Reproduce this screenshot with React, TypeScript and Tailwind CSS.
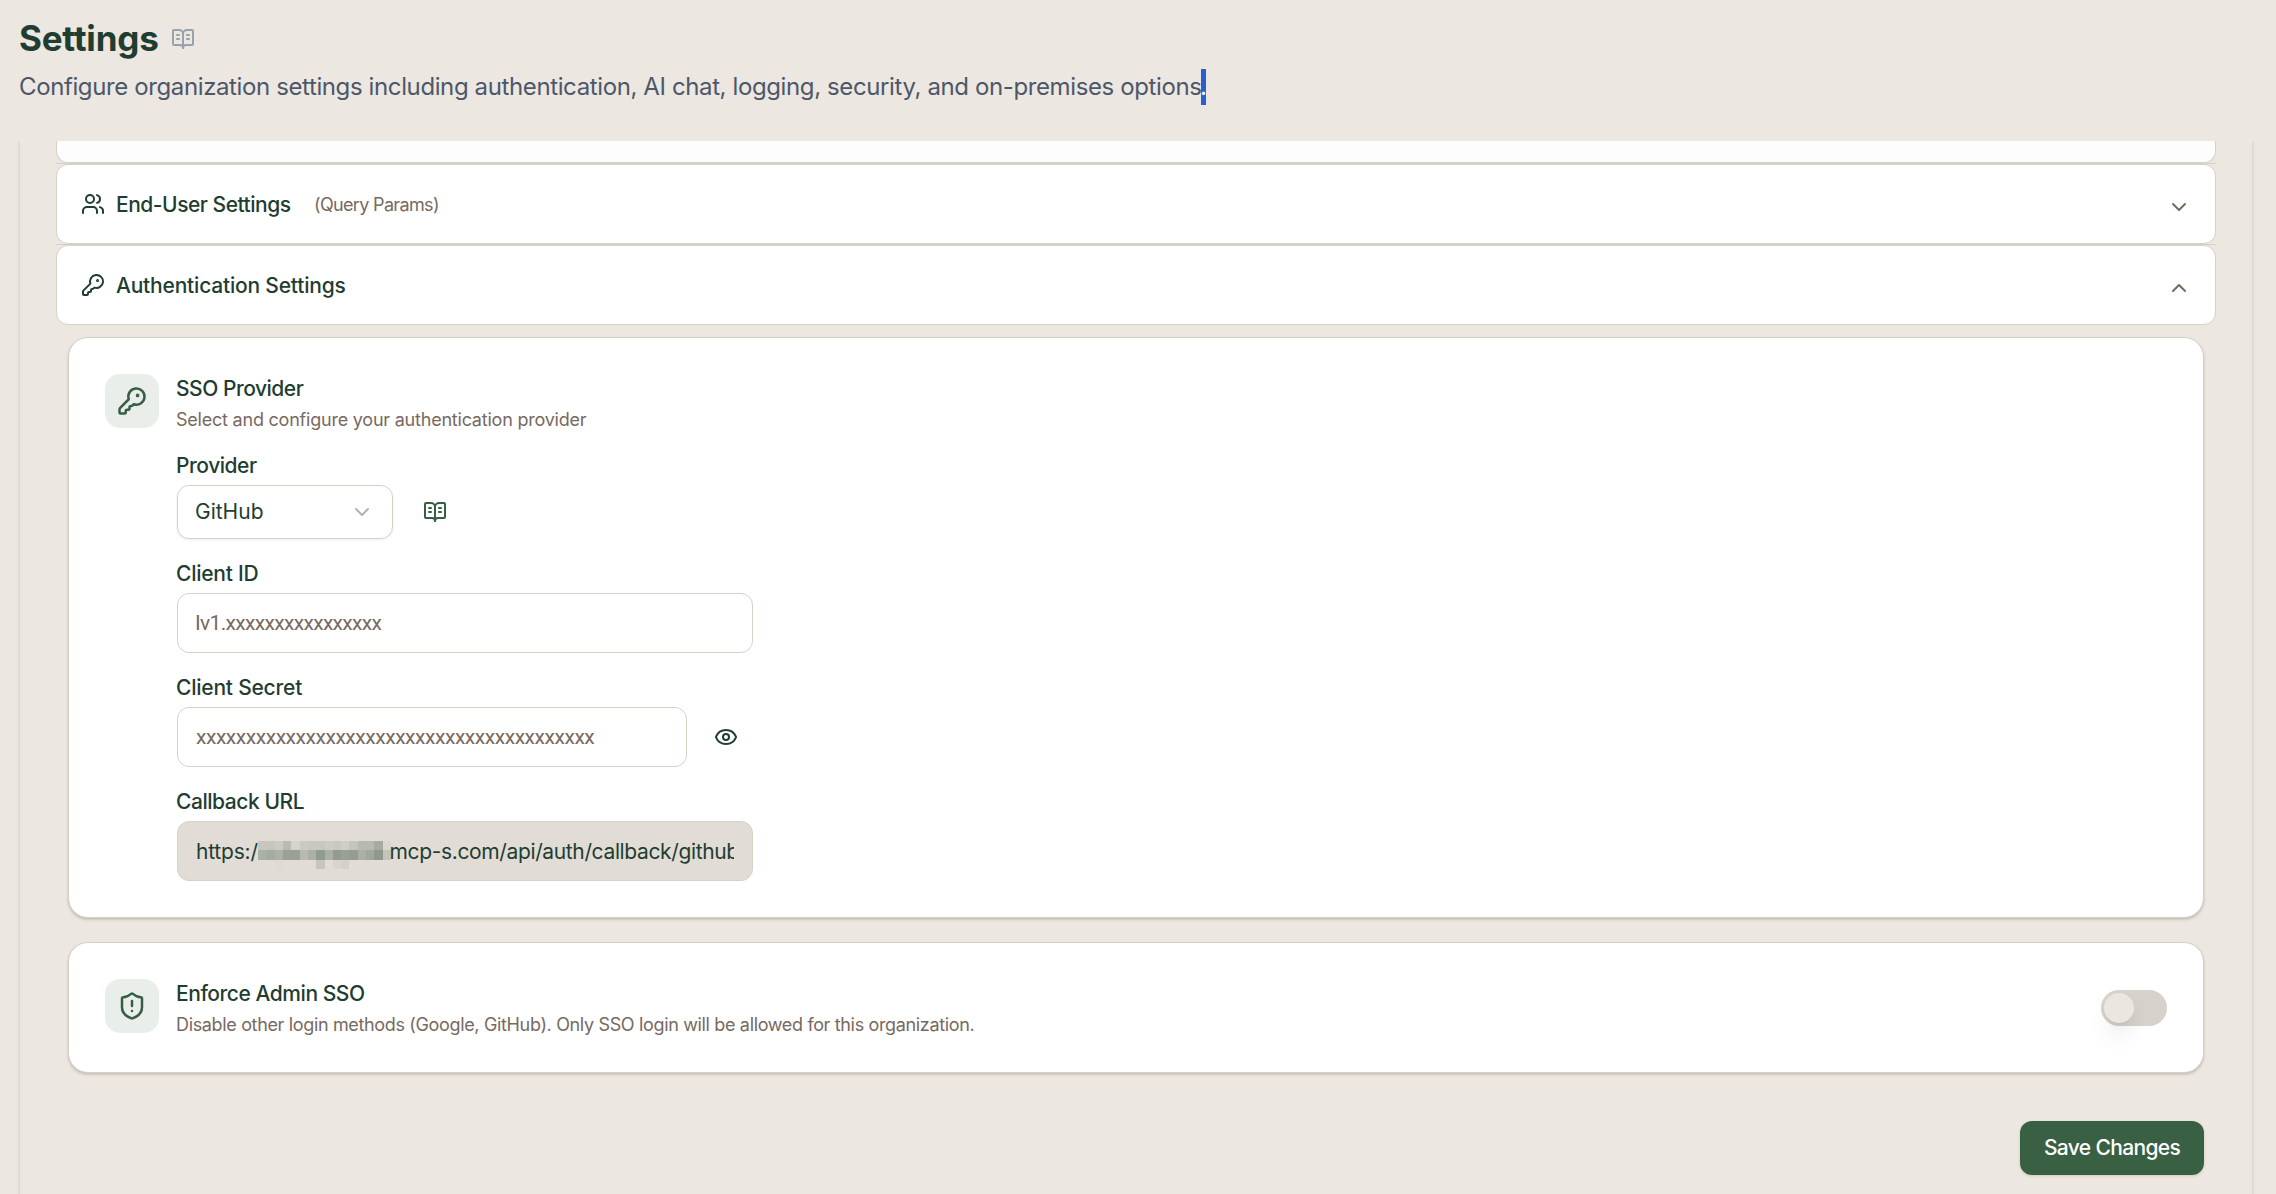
import type { ReactNode } from "react";
import { BookOpenText, ChevronDown, ChevronUp, Eye, KeyRound, ShieldAlert, Users } from "lucide-react";

const MOSAIC: string[][] = [
  ["#c7c7bf", "#c6c6be", "#cccac3", "#b9bcb4", "#d6d3cb", "#cbcac2", "#c8c8c0", "#c8c8c0", "#cecbc4", "#cac9c1", "#d0cec6", "#c5c5bd", "#b8bab1", "#b8bab1", "#a6aaa1", "#dbd6cf"],
  ["#acb1a7", "#a4aba0", "#acb1a7", "#9ba19a", "#9aa098", "#b8bab1", "#abafa5", "#929b92", "#abafa5", "#929b92", "#99a096", "#949c93", "#abafa5", "#a1a79d", "#8f988f", "#c4c4bc"],
  ["#e1dcd5", "#e1dcd5", "#dfdad2", "#e1dcd5", "#e1dcd5", "#e1dcd5", "#e1dcd5", "#c6c6be", "#e1dcd5", "#d9d4cc", "#d5d1c9", "#e1dcd5", "#e1dcd5", "#e1dcd5", "#e1dcd5", "#e1dcd5"],
];

function Redacted() {
  return (
    <div className="grid h-7 w-[133px] shrink-0 grid-cols-16 grid-rows-[9px_10px_9px]">
      {MOSAIC.flat().map((color, i) => (
        <span key={i} style={{ backgroundColor: color }} />
      ))}
    </div>
  );
}

function AccordionRow({ icon, chevron, children }: { icon: ReactNode; chevron: ReactNode; children: ReactNode }) {
  return (
    <div className="flex h-20 items-center rounded-xl border border-[#d6d1c7] bg-white pr-6 pl-6">
      {icon}
      <div className="mt-px ml-[11px] flex items-center text-[21px] font-medium">{children}</div>
      <div className="mt-1.5 ml-auto text-[#78695f]">{chevron}</div>
    </div>
  );
}

function Card({ children }: { children: ReactNode }) {
  return (
    <div className="rounded-[20px] border border-[#d6d1c7] bg-white p-9 shadow-[0_2px_3px_rgba(60,50,30,0.13),0_1px_2px_rgba(60,50,30,0.12)]">
      {children}
    </div>
  );
}

function Tile({ children }: { children: ReactNode }) {
  return (
    <div className="flex size-[54px] shrink-0 items-center justify-center rounded-[15px] bg-[#e9eeea] text-[#365e42]">
      {children}
    </div>
  );
}

function Label({ className, children }: { className: string; children: ReactNode }) {
  return <div className={`-ml-px h-[35px] text-[21px] leading-[32px] font-medium ${className}`}>{children}</div>;
}

export default function App() {
  return (
    <div className="flex h-[1194px] flex-col overflow-hidden bg-[#ece7e0] font-['Inter',sans-serif] whitespace-nowrap text-[#1f3d31]">
      <header className="h-[141px] shrink-0 pt-3.5 pl-[19px]">
        <div className="flex h-12 items-center">
          <h1 className="w-[152px] text-[35px] leading-[48px] font-bold tracking-[-0.2px]">Settings</h1>
          <BookOpenText className="mt-0.5 size-6 text-[#99a1af]" />
        </div>
        <p className="mt-[7px] flex text-2xl leading-[36px] text-[#4d576a]">
          <span className="w-[1182px] tracking-[-0.385px]">
            Configure organization settings including authentication, AI chat, logging, security, and on-premises options
          </span>
          <span className="h-9 w-[5px] bg-[#2b5fcf] text-white">
            <span className="-ml-px">.</span>
          </span>
        </p>
      </header>

      <main className="mr-[23px] ml-[19px] min-h-0 flex-1 border-x border-[#dcd7d0] px-9 shadow-[0_1px_3px_rgba(60,50,30,0.1)] [clip-path:inset(0_-4px)]">
        <div className="h-[22px] rounded-b-xl border border-t-0 border-[#d6d1c7] bg-[#fdfdfd]" />
        <div className="h-px bg-[#d6d1c7]" />
        <AccordionRow icon={<Users className="size-6" />} chevron={<ChevronDown className="size-6" />}>
          <span className="w-[198px] tracking-[-0.48px]">End-User Settings</span>
          <span className="text-lg font-normal tracking-[-0.66px] text-[#78695f]">(Query Params)</span>
        </AccordionRow>
        <div className="h-px bg-[#d6d1c7]" />
        <AccordionRow icon={<KeyRound className="size-6" />} chevron={<ChevronUp className="size-6" />}>
          <span className="tracking-[-0.2px]">Authentication Settings</span>
        </AccordionRow>

        <div className="flex flex-col px-3 pt-3">
          <Card>
            <div className="flex gap-[18px]">
              <Tile>
                <KeyRound className="size-[30px]" />
              </Tile>
              <div>
                <h2 className="-ml-px text-[21px] leading-[30px] font-medium tracking-[-0.48px]">SSO Provider</h2>
                <p className="mt-0.5 -ml-px text-lg leading-[27px] tracking-[-0.22px] text-[#78695f]">
                  Select and configure your authentication provider
                </p>

                <div className="mt-[17px] w-[576px]">
                  <Label className="tracking-[-0.45px]">Provider</Label>
                  <div className="flex items-center">
                    <div className="flex h-[54px] w-[216px] items-center justify-between rounded-xl border border-[#d6d1c7] pr-[18px] pl-[17px] text-[21px] shadow-[0_1px_3px_rgba(0,0,0,0.08)]">
                      <span>GitHub</span>
                      <ChevronDown className="size-6 text-[#b7b1ab]" />
                    </div>
                    <BookOpenText className="ml-[30px] size-6 text-[#365e42]" />
                  </div>
                </div>

                <div className="mt-[19px] w-[576px]">
                  <Label className="tracking-[-0.25px]">Client ID</Label>
                  <div className="flex h-[60px] items-center rounded-xl border border-[#d6d1c7] px-[17px] pt-0.5 font-['Roboto',sans-serif] text-[21px] tracking-[-0.68px] text-[#78695f]">
                    Iv1.xxxxxxxxxxxxxxxx
                  </div>
                </div>

                <div className="mt-[19px] w-[576px]">
                  <Label className="tracking-[-0.22px]">Client Secret</Label>
                  <div className="flex items-center">
                    <div className="flex h-[60px] w-[510px] items-center rounded-xl border border-[#d6d1c7] px-[18px] pt-0.5 font-['Roboto',sans-serif] text-[21px] tracking-[-0.46px] text-[#78695f]">
                      xxxxxxxxxxxxxxxxxxxxxxxxxxxxxxxxxxxxxxxx
                    </div>
                    <Eye className="ml-[27px] size-6" />
                  </div>
                </div>

                <div className="mt-[19px] w-[576px]">
                  <Label className="tracking-[-0.45px]">Callback URL</Label>
                  <div className="flex h-[60px] items-center rounded-xl border border-[#d6d1c7] bg-[#e1dcd5] px-[18px] text-[21px]">
                    <div className="flex h-9 w-full items-center overflow-hidden">
                      <span className="mt-px w-[62px] shrink-0 overflow-hidden tracking-[-0.2px]">https://</span>
                      <div className="mt-2">
                        <Redacted />
                      </div>
                      <span className="mt-px -ml-[1.5px] tracking-[-0.36px]">mcp-s.com/api/auth/callback/github</span>
                    </div>
                  </div>
                </div>
              </div>
            </div>
          </Card>

          <div className="mt-6">
            <Card>
              <div className="flex gap-[18px]">
                <Tile>
                  <ShieldAlert className="size-[30px]" />
                </Tile>
                <div>
                  <h2 className="-ml-px text-[21px] leading-[30px] font-medium tracking-[-0.45px]">Enforce Admin SSO</h2>
                  <p className="mt-0.5 -ml-px h-[25px] text-lg leading-[27px] tracking-[-0.345px] text-[#78695f]">
                    Disable other login methods (Google, GitHub). Only SSO login will be allowed for this organization.
                  </p>
                </div>
                <div className="mt-[11px] ml-auto h-9 w-[66px] rounded-full bg-[#d6d1ca] p-[3px]">
                  <div className="size-[30px] rounded-full bg-[#ebe6df] shadow-[0_15px_22px_-4px_rgba(0,0,0,0.1),0_6px_9px_-6px_rgba(0,0,0,0.1)]" />
                </div>
              </div>
            </Card>
          </div>

          <button className="mt-12 flex h-[54px] w-[184px] items-center justify-center self-end rounded-xl bg-[#396043] text-[21px] font-medium tracking-[-0.65px] text-white shadow-[0_1px_3px_rgba(60,50,30,0.15)]">
            Save Changes
          </button>
        </div>
      </main>
    </div>
  );
}
